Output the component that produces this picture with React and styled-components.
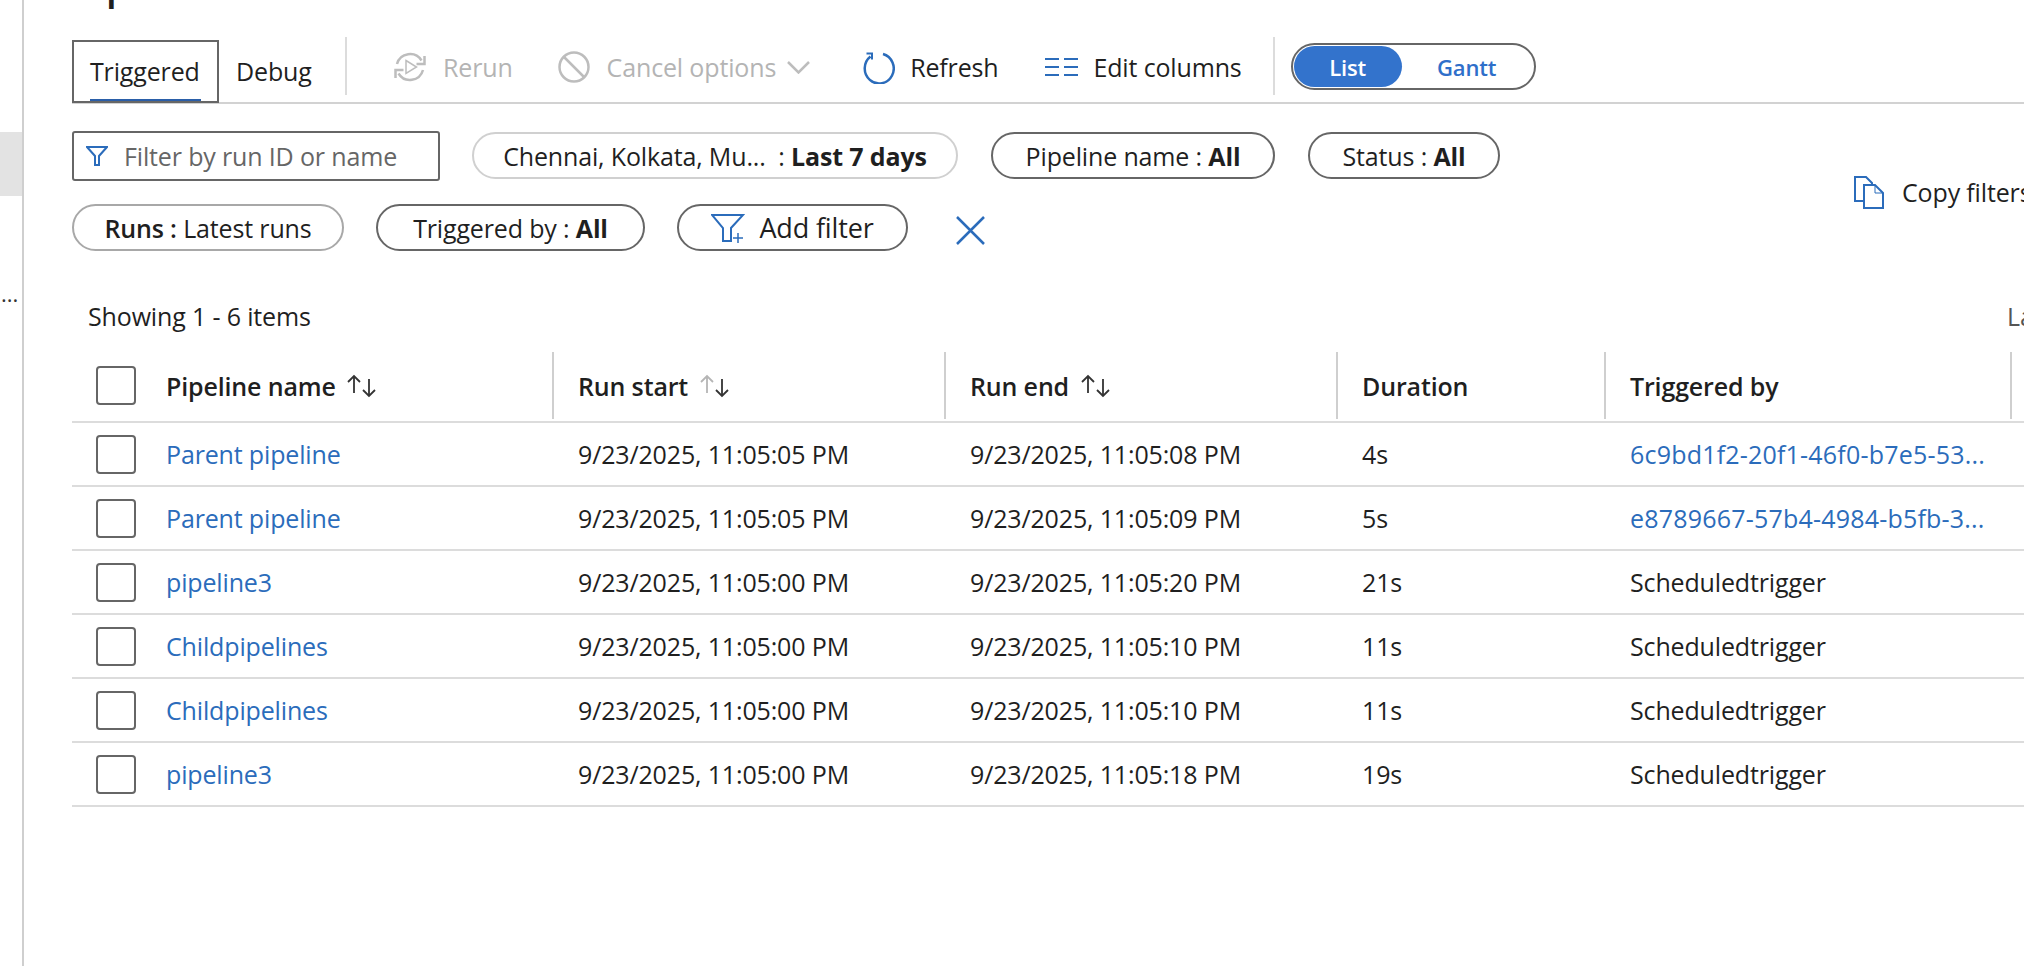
import React from "react";
import styled, { createGlobalStyle } from "styled-components";

const BLUE = "#2b6cbb";

const GlobalStyle = createGlobalStyle`
  html, body {
    margin: 0;
    padding: 0;
    height: 100%;
    background: #fff;
    overflow: hidden;
  }
  body {
    font-family: "Open Sans", "Liberation Sans", sans-serif;
    font-size: 25px;
    color: #1f1f1f;
    letter-spacing: -0.15px;
  }
  #root { height: 100%; }
`;

const Page = styled.div`
  display: flex;
  width: 2024px;
  height: 966px;
  overflow: hidden;
`;

const Sidebar = styled.aside`
  flex: 0 0 24px;
  box-sizing: border-box;
  border-right: 2px solid #cfcfcf;
  padding-top: 132px;
`;

const SideItem = styled.div`
  height: 64px;
  background: #e3e3e3;
`;

const SideMore = styled.div`
  margin-top: 83px;
  padding-left: 1px;
  font-size: 22px;
  line-height: 28px;
  letter-spacing: 0;
  color: #333;
`;

const Main = styled.main`
  flex: 1;
  min-width: 0;
  padding-left: 48px;
`;

const TitleClip = styled.div`
  height: 9px;
  overflow: hidden;
  position: relative;
`;

const Title = styled.h1`
  position: absolute;
  left: -2px;
  top: -36px;
  margin: 0;
  font-size: 40px;
  font-weight: 600;
  line-height: 40px;
  letter-spacing: 0;
  white-space: nowrap;
`;

const Toolbar = styled.div`
  display: flex;
  align-items: center;
  box-sizing: border-box;
  height: 67px;
  margin-top: 28px;
  border-bottom: 2px solid #d2d2d2;
`;

const Tabs = styled.div`
  display: flex;
  align-self: flex-end;
  flex: 0 0 273px;
  height: 63px;
  margin-bottom: -1px;
`;

const Tab = styled.div`
  position: relative;
  box-sizing: border-box;
  display: flex;
  align-items: center;
  width: ${(p) => p.$width}px;
  padding-left: ${(p) => (p.$active ? 16 : 15)}px;
  padding-bottom: 1px;
  border: 2px solid ${(p) => (p.$active ? "#666" : "transparent")};

  ${(p) =>
    p.$active &&
    `&::after {
      content: "";
      position: absolute;
      left: 16px;
      right: 16px;
      bottom: 0;
      height: 2px;
      background: #2a5ea8;
    }`}
`;

const VDivider = styled.div`
  flex: 0 0 2px;
  align-self: flex-start;
  height: 58px;
  margin-left: ${(p) => p.$left || 0}px;
  background: #dcdcdc;
`;

const Action = styled.div`
  display: flex;
  align-items: center;
  gap: ${(p) => p.$gap || 17}px;
  margin-left: ${(p) => p.$left}px;
  color: ${(p) => (p.$disabled ? "#b4b4b4" : "#1f1f1f")};
  margin-top: -5px;
  white-space: nowrap;
`;

const ChevronWrap = styled.span`
  display: flex;
  margin-left: -6px;
`;

const Toggle = styled.div`
  display: flex;
  box-sizing: border-box;
  width: 245px;
  height: 47px;
  margin-left: 16px;
  margin-top: -6px;
  padding: 1px;
  border: 2px solid #666;
  border-radius: 24px;
  font-weight: 600;
  font-size: 22px;
`;

const ToggleItem = styled.div`
  display: flex;
  align-items: center;
  justify-content: center;
  width: ${(p) => p.$width}px;
  border-radius: 22px;
  background: ${(p) => (p.$active ? "#3373cc" : "transparent")};
  color: ${(p) => (p.$active ? "#fff" : "#2f6fca")};
`;

const FilterArea = styled.div`
  display: flex;
  align-items: center;
  margin-top: 27px;
`;

const FilterRows = styled.div`
  flex: 1;
  display: flex;
  flex-direction: column;
  gap: 23px;
`;

const FilterRow = styled.div`
  display: flex;
  align-items: flex-start;
`;

const Search = styled.div`
  display: flex;
  align-items: center;
  box-sizing: border-box;
  width: 368px;
  height: 50px;
  padding-left: 12px;
  gap: 16px;
  border: 2px solid #666;
  border-radius: 3px;
  color: #666;
  white-space: nowrap;
`;

const Pill = styled.div`
  display: flex;
  align-items: center;
  justify-content: center;
  gap: ${(p) => p.$gap || 0}px;
  box-sizing: border-box;
  width: ${(p) => p.$width}px;
  height: 47px;
  margin-left: ${(p) => p.$left || 0}px;
  margin-top: ${(p) => p.$top || 0}px;
  border: 2px solid ${(p) => p.$border || "#666"};
  border-radius: 24px;
  font-size: ${(p) => p.$size || 25}px;
  white-space: nowrap;
`;

const Bold = styled.b`
  font-weight: ${(p) => p.$weight || 700};
`;

const ClearButton = styled.div`
  display: flex;
  margin-left: 48px;
  margin-top: 12px;
`;

const CopyFilters = styled.div`
  flex: 0 0 170px;
  display: flex;
  align-items: center;
  gap: 18px;
  padding-top: 2px;
  overflow: hidden;
  white-space: nowrap;
`;

const StatusRow = styled.div`
  display: flex;
  justify-content: space-between;
  align-items: center;
  height: 40px;
  margin-top: 45px;
  margin-bottom: 16px;
  padding-left: 16px;
`;

const LastRefreshed = styled.div`
  width: 17px;
  overflow: hidden;
  white-space: nowrap;
  color: #555;
`;

const GridRow = styled.div`
  display: grid;
  grid-template-columns: 482px 392px 392px 268px 406px 1fr;
  box-sizing: border-box;
  height: ${(p) => (p.$header ? 71 : 64)}px;
  border-bottom: 2px solid #dcdcdc;
`;

const HeadCell = styled.div`
  display: flex;
  align-items: center;
  box-sizing: border-box;
  height: 67px;
  padding-left: 24px;
  gap: 11px;
  border-right: 2px solid #cfcfcf;
  font-weight: 600;
  white-space: nowrap;
`;

const NameHead = styled(HeadCell)`
  gap: 0;
`;

const NameCell = styled.div`
  display: flex;
  align-items: center;
  padding-left: 24px;
`;

const Cell = styled.div`
  display: flex;
  align-items: center;
  min-width: 0;
  padding-left: 24px;
  white-space: nowrap;
`;

const Check = styled.div`
  flex: 0 0 40px;
  box-sizing: border-box;
  height: 39px;
  margin-right: 30px;
  border: 2px solid #666;
  border-radius: 4px;
`;

const HeadLabel = styled.span`
  margin-right: 10px;
`;

const LinkText = styled.a`
  color: ${BLUE};
  text-decoration: none;
`;

const TriggerLink = styled(LinkText)`
  letter-spacing: 0.2px;
`;

const Svg = ({ w, h, children, color = BLUE, sw = 2 }) => (
  <svg
    width={w}
    height={h}
    viewBox={`0 0 ${w} ${h}`}
    fill="none"
    stroke={color}
    strokeWidth={sw}
    style={{ flexShrink: 0 }}
  >
    {children}
  </svg>
);

const RerunIcon = () => (
  <Svg w={32} h={32} color="#bdbdbd" sw={2.5}>
    <path d="M3 13A13.5 13.5 0 0 1 27.5 9.5" />
    <path d="M30.5 5v8h-8" />
    <path d="M29 19A13.5 13.5 0 0 1 4.5 22.5" />
    <path d="M1.5 27v-8h8" />
    <path d="M12 9.5l10.5 6.5L12 22.5z" strokeWidth={1.5} />
  </Svg>
);

const CancelIcon = () => (
  <Svg w={32} h={32} color="#bdbdbd" sw={2.5}>
    <circle cx="16" cy="16" r="14.5" />
    <path d="M6 6l20 20" />
  </Svg>
);

const ChevronIcon = () => (
  <Svg w={23} h={13} color="#bdbdbd" sw={2.5}>
    <path d="M1 1l10.5 10.5L22 1" />
  </Svg>
);

const RefreshIcon = () => (
  <Svg w={33} h={33} sw={2.5}>
    <path d="M21 3A14.5 15 0 1 1 8.5 5.5" />
    <path d="M4.5 2.5h5.5v6" strokeWidth={2} />
  </Svg>
);

const ColumnsIcon = () => (
  <Svg w={33} h={18} sw={2}>
    <path d="M0 1h14M19 1h14M0 9h14M19 9h14M0 17h14M19 17h14" />
  </Svg>
);

const FunnelIcon = () => (
  <Svg w={22} h={20} sw={2}>
    <path d="M1 1h20l-8 9v9h-4v-9z" />
  </Svg>
);

const AddFilterIcon = () => (
  <Svg w={34} h={30} sw={2}>
    <path d="M1 2h31L20 15v13h-8V15z" />
    <path d="M22 25h10M27 20v10" strokeWidth={1.5} />
  </Svg>
);

const CloseIcon = () => (
  <Svg w={29} h={29} sw={2.5}>
    <path d="M1 1l27 27M28 1L1 28" />
  </Svg>
);

const CopyIcon = () => (
  <Svg w={30} h={33} sw={2}>
    <path d="M10 25H1V1h11l6 6v2" />
    <path d="M10 9h11l8 8v15H10z" />
    <path d="M21 10v7h7" strokeWidth={1} />
  </Svg>
);

const SortIcon = ({ dimUp }) => (
  <Svg w={31} h={24} color="#333" sw={1.8}>
    <path d="M8 19V2M2 8l6-6 6 6" stroke={dimUp ? "#b5b5b5" : "#333"} />
    <path d="M23 5v17M17 16l6 6 6-6" />
  </Svg>
);

const RUNS = [
  {
    name: "Parent pipeline",
    start: "9/23/2025, 11:05:05 PM",
    end: "9/23/2025, 11:05:08 PM",
    duration: "4s",
    by: "6c9bd1f2-20f1-46f0-b7e5-53...",
    link: true,
  },
  {
    name: "Parent pipeline",
    start: "9/23/2025, 11:05:05 PM",
    end: "9/23/2025, 11:05:09 PM",
    duration: "5s",
    by: "e8789667-57b4-4984-b5fb-3...",
    link: true,
  },
  {
    name: "pipeline3",
    start: "9/23/2025, 11:05:00 PM",
    end: "9/23/2025, 11:05:20 PM",
    duration: "21s",
    by: "Scheduledtrigger",
  },
  {
    name: "Childpipelines",
    start: "9/23/2025, 11:05:00 PM",
    end: "9/23/2025, 11:05:10 PM",
    duration: "11s",
    by: "Scheduledtrigger",
  },
  {
    name: "Childpipelines",
    start: "9/23/2025, 11:05:00 PM",
    end: "9/23/2025, 11:05:10 PM",
    duration: "11s",
    by: "Scheduledtrigger",
  },
  {
    name: "pipeline3",
    start: "9/23/2025, 11:05:00 PM",
    end: "9/23/2025, 11:05:18 PM",
    duration: "19s",
    by: "Scheduledtrigger",
  },
];

const App = () => {
  return (
    <>
      <GlobalStyle />
      <Page>
        <Sidebar>
          <SideItem />
          <SideMore>...</SideMore>
        </Sidebar>
        <Main>
          <TitleClip>
            <Title>Pipeline runs</Title>
          </TitleClip>
          <Toolbar>
            <Tabs>
              <Tab $active $width={147}>Triggered</Tab>
              <Tab $width={126}>Debug</Tab>
            </Tabs>
            <VDivider />
            <Action $disabled $left={47}>
              <RerunIcon />
              Rerun
            </Action>
            <Action $disabled $left={45}>
              <CancelIcon />
              Cancel options
              <ChevronWrap>
                <ChevronIcon />
              </ChevronWrap>
            </Action>
            <Action $left={52} $gap={15}>
              <RefreshIcon />
              Refresh
            </Action>
            <Action $left={47} $gap={15}>
              <ColumnsIcon />
              Edit columns
            </Action>
            <VDivider $left={31} />
            <Toggle>
              <ToggleItem $active $width={108}>List</ToggleItem>
              <ToggleItem $width={130}>Gantt</ToggleItem>
            </Toggle>
          </Toolbar>
          <FilterArea>
            <FilterRows>
              <FilterRow>
                <Search>
                  <FunnelIcon />
                  Filter by run ID or name
                </Search>
                <Pill $width={486} $left={32} $top={1} $border="#d0d0d0">
                  Chennai, Kolkata, Mu...&nbsp;&nbsp;:&nbsp;<Bold>Last 7 days</Bold>
                </Pill>
                <Pill $width={284} $left={33} $top={1}>
                  Pipeline name :&nbsp;<Bold>All</Bold>
                </Pill>
                <Pill $width={192} $left={33} $top={1}>
                  Status :&nbsp;<Bold>All</Bold>
                </Pill>
              </FilterRow>
              <FilterRow>
                <Pill $width={272} $border="#a8a8a8">
                  <Bold $weight={600}>Runs :</Bold>&nbsp;Latest runs
                </Pill>
                <Pill $width={269} $left={32}>
                  Triggered by :&nbsp;<Bold>All</Bold>
                </Pill>
                <Pill $width={231} $left={32} $gap={14} $size={27}>
                  <AddFilterIcon />
                  Add filter
                </Pill>
                <ClearButton>
                  <CloseIcon />
                </ClearButton>
              </FilterRow>
            </FilterRows>
            <CopyFilters>
              <CopyIcon />
              Copy filters
            </CopyFilters>
          </FilterArea>
          <StatusRow>
            <span>Showing 1 - 6 items</span>
            <LastRefreshed>Last refreshed</LastRefreshed>
          </StatusRow>
          <GridRow $header>
            <NameHead>
              <Check />
              <HeadLabel>Pipeline name</HeadLabel>
              <SortIcon />
            </NameHead>
            <HeadCell>
              Run start
              <SortIcon dimUp />
            </HeadCell>
            <HeadCell>
              Run end
              <SortIcon />
            </HeadCell>
            <HeadCell>Duration</HeadCell>
            <HeadCell>Triggered by</HeadCell>
            <div />
          </GridRow>
          {RUNS.map((run, i) => (
            <GridRow key={i}>
              <NameCell>
                <Check />
                <LinkText>{run.name}</LinkText>
              </NameCell>
              <Cell>{run.start}</Cell>
              <Cell>{run.end}</Cell>
              <Cell>{run.duration}</Cell>
              <Cell>
                {run.link ? <TriggerLink>{run.by}</TriggerLink> : run.by}
              </Cell>
              <div />
            </GridRow>
          ))}
        </Main>
      </Page>
    </>
  );
};

export default App;
